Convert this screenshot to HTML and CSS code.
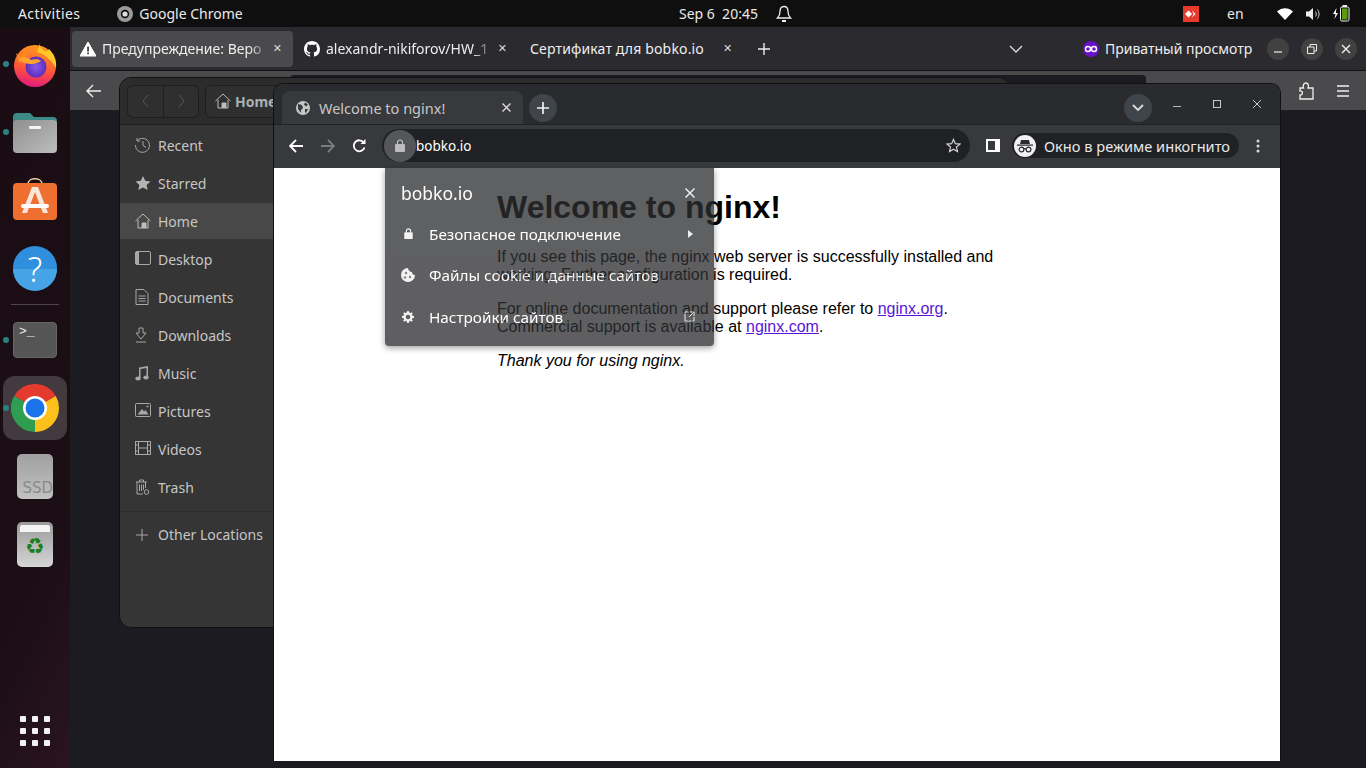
FILE: index.html
```html
<!DOCTYPE html>
<html lang="en">
<head>
    <meta charset="UTF-8">
    <title>Welcome to nginx!</title>
    <link rel="stylesheet" href="styles.css">
</head>
<body>
    <!-- gnome top bar -->
    <header class="topbar">
        <div class="topbar-left">
            <span class="activities">Activities</span>
            <span class="app-menu">
                <svg width="16" height="16" viewBox="0 0 16 16"><circle cx="8" cy="8" r="8" fill="#9a9a9a"/><circle cx="8" cy="8" r="4.2" fill="#0f0f0f"/><circle cx="8" cy="8" r="2.6" fill="#e0e0e0"/></svg>
                Google Chrome
            </span>
        </div>
        <div class="clock">
            <span>Sep 6&nbsp; 20:45</span>
            <svg width="16" height="18" viewBox="0 0 16 18" fill="none" stroke="#eee" stroke-width="1.3"><path d="M8 1.5c-3 0-4 2.300-4 5 0 3-1 5-2.500 6.500h13C13 11.500 12 9.500 12 6.500c0-2.700-1-5-4-5z"/><path d="M6 16h4" stroke-width="2"/></svg>
        </div>
        <div class="tray">
            <span class="anydesk"><svg width="12" height="8" viewBox="0 0 12 8" fill="#fff"><path d="M0 4l3.500-3.500L7 4 3.500 7.500z"/><path d="M7 .5L10.500 4 7 7.500 8.500 4z"/></svg></span>
            <span class="lang">en</span>
            <svg class="tray-wifi" width="16" height="12" viewBox="0 0 16 12" fill="#fff"><path d="M0 3.500C4.500-1 11.500-1 16 3.500L8 12z"/></svg>
            <svg class="tray-sound" width="15" height="14" viewBox="0 0 15 14" fill="none" stroke="#ddd"><path d="M0 4.500h3L7 1v12L3 9.500H0z" fill="#eee" stroke="none"/><path d="M9.500 4.500c1 1.500 1 3.500 0 5M11.500 2.500c2 2.700 2 6.300 0 9"/></svg>
            <svg class="tray-battery" width="17" height="17" viewBox="0 0 17 17"><path d="M3.500 3L0 9h2.500L1.500 14 5 8H2.800z" fill="#fff"/><rect x="7.500" y="2" width="8.500" height="14" rx="1.500" fill="#111" stroke="#eee"/><rect x="9.500" y="0" width="4.500" height="2" fill="#eee"/><rect x="9" y="3.500" width="5.500" height="11" fill="#5d9a0c"/></svg>
        </div>
    </header>

    <!-- dock -->
    <nav class="dock">
        <div class="dock-item running">
            <svg width="44" height="46" viewBox="0 0 44 46">
                <defs>
                    <linearGradient id="fox" x1="0.6" y1="0" x2="0.4" y2="1"><stop offset="0" stop-color="#ff9a1f"/><stop offset=".55" stop-color="#ff5a36"/><stop offset="1" stop-color="#e3197d"/></linearGradient>
                    <radialGradient id="globe"><stop offset="0" stop-color="#8a5bea"/><stop offset="1" stop-color="#5b2db8"/></radialGradient>
                </defs>
                <circle cx="22" cy="25" r="21" fill="url(#fox)"/>
                <path d="M28 0c-3 5 0 8 5 11l3-3c5 5 8 11 7 19-4-7-11-14-19-16 2-4 2-7 4-11z" fill="#ffc928"/>
                <path d="M3 12l4 4 5-8c0 2 1 4 3 5l-9 9z" fill="#ff8a1f"/>
                <circle cx="23" cy="26" r="10.500" fill="url(#globe)"/>
                <path d="M5 18c5-3 10-2 13 1 4-1 8-1 10 1-2 1-6 3-9 3-4 0-10-1-14-5z" fill="#ffa52a"/>
            </svg>
        </div>
        <div class="dock-item running">
            <svg width="44" height="42" viewBox="0 0 44 42">
                <path d="M0 6q0-4 4-4h13l4 4h19q4 0 4 4v14H0z" fill="#3b8a87"/>
                <defs><linearGradient id="folder" x1="0" y1="0" x2="1" y2="1"><stop offset="0" stop-color="#8f8f8f"/><stop offset="1" stop-color="#bdbdbd"/></linearGradient></defs>
                <rect y="9" width="44" height="33" rx="4" fill="url(#folder)"/>
                <rect x="16" y="15" width="12" height="3" rx="1" fill="#f4f4f4"/>
            </svg>
        </div>
        <div class="dock-item">
            <svg width="44" height="44" viewBox="0 0 44 44">
                <path d="M15 6c0-7 14-7 14 0" fill="none" stroke="#eec9a0" stroke-width="1.600"/>
                <rect y="5" width="44" height="37" rx="4" fill="#ef6f31"/>
                <path d="M19 9h6l10 26h-5L22 14 14 35H9z" fill="#fbe6da"/>
                <rect x="8" y="26" width="28" height="4" rx="2" fill="#fff"/>
            </svg>
        </div>
        <div class="dock-item">
            <svg class="help-icon" width="44" height="44" viewBox="0 0 44 44">
                <circle cx="22" cy="22" r="22" fill="#2f8fdd"/>
                <path d="M0 23h44a22 22 0 0 1-44 0z" fill="#46a3e6"/>
                <text x="22" y="36" class="help-mark">?</text>
            </svg>
        </div>
        <div class="dock-sep"></div>
        <div class="dock-item running">
            <div class="terminal-icon"><span>&gt;_</span></div>
        </div>
        <div class="dock-item running active">
            <svg width="48" height="48" viewBox="0 0 48 48">
                <path d="M24 24L3.200 12A24 24 0 0 1 44.800 12z" fill="#e33b2e"/>
                <path d="M24 24h24a24 24 0 0 1-24 24l-0.500 0z" fill="#fcc21b"/>
                <path d="M44.800 12A24 24 0 0 1 48 24H24z" fill="#fcc21b"/>
                <path d="M24 48A24 24 0 0 1 3.200 12L24 24z" fill="#2f9e50"/>
                <circle cx="24" cy="24" r="12" fill="#fff"/>
                <circle cx="24" cy="24" r="9.500" fill="#1a73e8"/>
            </svg>
        </div>
        <div class="dock-item">
            <div class="ssd-icon">SSD</div>
        </div>
        <div class="dock-item">
            <div class="trash-icon">
                <span class="trash-lid"></span>
                <span class="trash-mark">♻</span>
            </div>
        </div>
        <div class="apps-grid">
            <i></i><i></i><i></i><i></i><i></i><i></i><i></i><i></i><i></i>
        </div>
    </nav>

    <!-- firefox window, in the back -->
    <section class="window firefox">
        <div class="ff-tabs">
            <div class="ff-tab current">
                <svg width="16" height="16" viewBox="0 0 16 16"><path d="M8 1l8 14H0z" fill="#fff" stroke="#fff" stroke-linejoin="round"/><rect x="7.200" y="5.500" width="1.700" height="5" fill="#333"/><rect x="7.200" y="11.500" width="1.700" height="1.700" fill="#333"/></svg>
                <span class="ff-tab-title fade">Предупреждение: Веро</span>
                <span class="x">✕</span>
            </div>
            <div class="ff-tab second">
                <svg width="16" height="16" viewBox="0 0 16 16" fill="#fff"><path d="M8 0C3.580 0 0 3.580 0 8c0 3.540 2.290 6.530 5.470 7.590.4.070.55-.17.550-.38 0-.19-.01-.82-.01-1.490-2.010.37-2.530-.49-2.690-.94-.09-.23-.48-.94-.82-1.130-.28-.15-.68-.52-.01-.53.630-.01 1.080.58 1.230.82.720 1.210 1.870.87 2.330.66.070-.52.280-.87.510-1.070-1.780-.2-3.640-.89-3.640-3.950 0-.87.310-1.590.820-2.150-.08-.2-.36-1.020.08-2.120 0 0 .67-.21 2.200.82.640-.18 1.320-.27 2-.27s1.360.09 2 .27c1.530-1.040 2.200-.82 2.200-.82.44 1.100.16 1.920.08 2.120.51.560.82 1.270.82 2.150 0 3.070-1.870 3.750-3.650 3.950.29.250.54.730.54 1.480 0 1.070-.01 1.930-.01 2.200 0 .21.150.460.550.380A8.010 8.010 0 0 0 16 8c0-4.420-3.580-8-8-8z"/></svg>
                <span class="ff-tab-title fade">alexandr-nikiforov/HW_1</span>
                <span class="x">✕</span>
            </div>
            <div class="ff-tab third">
                <span class="ff-tab-title">Сертификат для bobko.io</span>
                <span class="x">✕</span>
            </div>
            <svg class="ff-new" width="14" height="14" viewBox="0 0 14 14" stroke="#eee" stroke-width="1.400"><path d="M7 1v12M1 7h12"/></svg>
            <svg class="ff-list" width="14" height="8" viewBox="0 0 14 8" fill="none" stroke="#ddd" stroke-width="1.300"><path d="M1 1l6 6 6-6"/></svg>
            <span class="ff-private">
                <svg width="16" height="16" viewBox="0 0 16 16"><circle cx="8" cy="8" r="8" fill="#6a12c9"/><circle cx="5" cy="8" r="2.500" fill="none" stroke="#fff" stroke-width="1.400"/><circle cx="11" cy="8" r="2.500" fill="none" stroke="#fff" stroke-width="1.400"/></svg>
                Приватный просмотр
            </span>
            <div class="ff-controls">
                <span class="ff-btn"><svg width="10" height="10" viewBox="0 0 10 10" stroke="#eee" stroke-width="1.200"><path d="M1 8h8"/></svg></span>
                <span class="ff-btn"><svg width="10" height="10" viewBox="0 0 10 10" fill="none" stroke="#eee"><path d="M.5 3h6.500v6.500H.5zM3 3V.5h6.500V7H7"/></svg></span>
                <span class="ff-btn"><svg width="10" height="10" viewBox="0 0 10 10" stroke="#eee" stroke-width="1.400"><path d="M1 1l8 8M9 1l-8 8"/></svg></span>
            </div>
        </div>
        <div class="ff-toolbar">
            <svg width="16" height="14" viewBox="0 0 16 14" fill="none" stroke="#f0f0f0" stroke-width="1.400"><path d="M15 7H1M7 1L1 7l6 6"/></svg>
            <div class="ff-urlbar"></div>
            <svg class="ff-puzzle" width="16" height="18" viewBox="0 0 16 18" fill="none" stroke="#f0f0f0" stroke-width="1.300"><path d="M1 6h3.500c-1-3 .5-5 2.500-5s3 2 2 5H14v11H1v-4c3 .5 3.500-4.500 0-4z"/></svg>
            <svg class="ff-menu" width="14" height="12" viewBox="0 0 14 12" stroke="#f0f0f0" stroke-width="1.400"><path d="M1 1h12M1 6h12M1 11h12"/></svg>
        </div>
        <div class="ff-content"></div>
    </section>

    <!-- nautilus window, in the middle -->
    <section class="window files">
        <div class="files-head">
            <div class="nav-pair">
                <span class="nav-btn"><svg width="7" height="14" viewBox="0 0 7 14" fill="none" stroke="#5a5a5a"><path d="M6 1L1 7l5 6"/></svg></span>
                <span class="nav-btn"><svg width="7" height="14" viewBox="0 0 7 14" fill="none" stroke="#5a5a5a"><path d="M1 1l5 6-5 6"/></svg></span>
            </div>
            <div class="path-btn">
                <svg class="icon" width="16" height="16" viewBox="0 0 16 16" fill="none" stroke="#bdbdbd"><path d="M.5 8L8 1l7.500 7M3 7v8h10V7"/><path d="M7 15v-5h4v5" fill="#bdbdbd"/></svg>
                <b>Home</b>
            </div>
        </div>
        <ul class="places">
            <li><svg width="16" height="16" viewBox="0 0 16 16" fill="none" stroke="#a8a8a8"><path d="M2 4a7 7 0 1 1-1.500 4M2 1v3h3M8 4v4.500l3 2"/></svg>Recent</li>
            <li><svg width="16" height="16" viewBox="0 0 16 16" fill="#b4b4b4"><path d="M8 1l2.200 4.800 5.300.6-3.900 3.500 1.100 5.200L8 12.400l-4.700 2.700 1.100-5.200L.5 6.400l5.300-.6z"/></svg>Starred</li>
            <li class="selected"><svg width="16" height="16" viewBox="0 0 16 16" fill="none" stroke="#bdbdbd"><path d="M.5 8L8 1l7.500 7M3 7v8h10V7"/><path d="M7 15v-5h4v5" fill="#bdbdbd"/></svg>Home</li>
            <li><svg width="16" height="14" viewBox="0 0 16 14" fill="none" stroke="#a8a8a8"><rect x=".5" y=".5" width="15" height="13" rx="1.500"/><path d="M1 1h3v12H1z" fill="#a8a8a8" stroke="none"/></svg>Desktop</li>
            <li><svg width="14" height="16" viewBox="0 0 14 16" fill="none" stroke="#a8a8a8"><path d="M1 .5h8l4 4v11H1zM3.500 7h7M3.500 9.500h7M3.500 12h7"/></svg>Documents</li>
            <li><svg width="12" height="16" viewBox="0 0 12 16" fill="none" stroke="#a8a8a8"><path d="M4 1h4v5h3l-5 6-5-6h3zM1 15h10"/></svg>Downloads</li>
            <li><svg width="14" height="16" viewBox="0 0 14 16" fill="#a8a8a8"><path d="M4 2.500L13 1v11h-1.500V3L5.500 4v9.500H4z"/><ellipse cx="3" cy="13.500" rx="2.700" ry="2"/><ellipse cx="11" cy="12.500" rx="2.700" ry="2"/></svg>Music</li>
            <li><svg width="16" height="14" viewBox="0 0 16 14" fill="none" stroke="#a8a8a8"><rect x=".5" y=".5" width="15" height="13" rx="1"/><path d="M2.500 11.500L7 6l2 2.500 1.500-1.500 3 4.500z" fill="#a8a8a8" stroke="none"/><circle cx="12.500" cy="3.500" r="1" fill="#a8a8a8" stroke="none"/></svg>Pictures</li>
            <li><svg width="16" height="14" viewBox="0 0 16 14" fill="none" stroke="#a8a8a8"><rect x=".5" y=".5" width="15" height="13"/><path d="M3.500 1v12M12.500 1v12M3.500 7h9M.5 4h3M.5 10h3M12.500 4h3M12.500 10h3"/></svg>Videos</li>
            <li><svg width="15" height="16" viewBox="0 0 15 16" fill="none" stroke="#a8a8a8"><path d="M1 3h11M4.500 3V1h4v2M2 3v12h6M10.500 3v6M4.500 5.500V12M6.500 5.500V12M8.500 5.500V11"/><circle cx="11.500" cy="13" r="2.300"/></svg>Trash</li>
            <li class="other"><svg width="14" height="14" viewBox="0 0 14 14" stroke="#a8a8a8"><path d="M7 1v12M1 7h12"/></svg>Other Locations</li>
        </ul>
    </section>

    <!-- chrome incognito window, in front -->
    <section class="window chrome">
        <div class="ch-tabs">
            <div class="ch-tab">
                <svg width="14" height="14" viewBox="0 0 14 14"><circle cx="7" cy="7" r="7" fill="#c4c7c5"/><path d="M2 3l4 1 1 3-2 2v3L2 8zM9 1.500l3 2-2 2-2-2zM9 8h3l-2 4-1-1z" fill="#38393c"/></svg>
                <span class="ch-title">Welcome to nginx!</span>
                <svg class="ch-close" width="9" height="9" viewBox="0 0 9 9" stroke="#dcdcdc" stroke-width="1.400"><path d="M.5.500l8 8M8.500.500l-8 8"/></svg>
            </div>
            <span class="ch-new"><svg width="12" height="12" viewBox="0 0 12 12" stroke="#f1f1f1" stroke-width="1.700"><path d="M6 0v12M0 6h12"/></svg></span>
            <span class="ch-search"><svg width="12" height="8" viewBox="0 0 12 8" fill="none" stroke="#dcdcdc" stroke-width="1.800"><path d="M1 1l5 5 5-5"/></svg></span>
            <div class="ch-controls">
                <svg width="10" height="10" viewBox="0 0 10 10" stroke="#b8b8b8"><path d="M1 7.500h8"/></svg>
                <svg width="10" height="10" viewBox="0 0 10 10" fill="none" stroke="#c8c8c8"><rect x="1.500" y="1.500" width="7" height="7"/></svg>
                <svg width="10" height="10" viewBox="0 0 10 10" stroke="#c8c8c8"><path d="M1 1l8 8M9 1l-8 8"/></svg>
            </div>
        </div>
        <div class="ch-toolbar">
            <svg width="14" height="14" viewBox="0 0 14 14" fill="none" stroke="#fff" stroke-width="1.800"><path d="M14 7H1.500M7 1L1 7l6 6"/></svg>
            <svg class="ch-fwd" width="14" height="14" viewBox="0 0 14 14" fill="none" stroke="#7a7b7d" stroke-width="1.800"><path d="M0 7h12.500M7 1l6 6-6 6"/></svg>
            <svg class="ch-reload" width="15" height="15" viewBox="0 0 15 15" fill="none" stroke="#fff" stroke-width="1.800"><path d="M12.500 9.500a5.500 5.500 0 1 1-.8-5"/><path d="M13.500 1v5h-5z" fill="#fff" stroke="none"/></svg>
            <div class="omnibox">
                <span class="lock-chip"><svg width="10" height="13" viewBox="0 0 10 13"><path d="M2.500 5V3.500a2.500 2.500 0 0 1 5 0V5" fill="none" stroke="#bcbcc0" stroke-width="1.200"/><rect y="5" width="10" height="8" rx="1" fill="#bcbcc0"/></svg></span>
                <span class="url">bobko.io</span>
                <svg class="star" width="15" height="15" viewBox="0 0 16 16" fill="none" stroke="#d0d0d0" stroke-width="1.300"><path d="M8 1.500l2 4.500 4.800.5-3.600 3.200 1 4.800L8 12l-4.200 2.500 1-4.800L1.200 6.500 6 6z"/></svg>
            </div>
            <svg class="ch-panel" width="14" height="13" viewBox="0 0 14 13"><rect width="14" height="13" fill="#fff"/><rect x="2" y="2" width="7" height="9" fill="#38393c"/></svg>
            <div class="incognito">
                <span class="incognito-icon">
                    <svg width="16" height="14" viewBox="0 0 16 14" fill="#2b2b2e"><path d="M4 1h8l1 4H3zM0 5.500h16V6.800H0z"/><g fill="none" stroke="#2b2b2e" stroke-width="1.200"><circle cx="4.500" cy="10.500" r="2.400"/><circle cx="11.500" cy="10.500" r="2.400"/><path d="M7 10c.6-.5 1.400-.5 2 0"/></g></svg>
                </span>
                <span>Окно в режиме инкогнито</span>
            </div>
            <svg class="ch-dots" width="4" height="14" viewBox="0 0 4 14" fill="#dcdcdc"><circle cx="2" cy="2" r="1.500"/><circle cx="2" cy="7" r="1.500"/><circle cx="2" cy="12" r="1.500"/></svg>
        </div>
        <main class="ch-page">
            <div class="nginx">
                <h1>Welcome to nginx!</h1>
                <p>If you see this page, the nginx web server is successfully installed and
                working. Further configuration is required.</p>
                <p>For online documentation and support please refer to
                <a href="#">nginx.org</a>.<br>
                Commercial support is available at
                <a href="#">nginx.com</a>.</p>
                <p><em>Thank you for using nginx.</em></p>
            </div>
            <!-- page info bubble, caught mid fade -->
            <div class="bubble">
                <div class="bubble-head">
                    <span>bobko.io</span>
                    <svg width="10" height="10" viewBox="0 0 10 10" stroke="#e8e8e8" stroke-width="1.500"><path d="M.5.500l9 9M9.500.500l-9 9"/></svg>
                </div>
                <div class="bubble-row">
                    <span class="bubble-icon"><svg width="9" height="11" viewBox="0 0 10 13"><path d="M2.500 5V3.500a2.500 2.500 0 0 1 5 0V5" fill="none" stroke="#eee" stroke-width="1.300"/><rect y="5" width="10" height="8" rx="1" fill="#eee"/></svg></span>
                    <span class="bubble-text">Безопасное подключение</span>
                    <svg class="bubble-end" width="5" height="8" viewBox="0 0 5 8" fill="#e8e8e8"><path d="M0 0l5 4-5 4z"/></svg>
                </div>
                <div class="bubble-row">
                    <span class="bubble-icon"><svg width="14" height="14" viewBox="0 0 14 14"><path d="M7 0a7 7 0 1 0 7 7c-2 0-3-1-3-3-2 0-4-2-4-4z" fill="#eee"/><g fill="#5f5f60"><circle cx="5" cy="5" r="1.200"/><circle cx="4" cy="9.500" r="1.200"/><circle cx="9" cy="9" r="1.200"/></g></svg></span>
                    <span class="bubble-text">Файлы cookie и данные сайтов</span>
                </div>
                <div class="bubble-row">
                    <span class="bubble-icon"><svg width="12" height="12" viewBox="0 0 12 12"><circle cx="6" cy="6" r="3.500" fill="none" stroke="#eee" stroke-width="2.400"/><path d="M6 0v2M6 10v2M0 6h2M10 6h2M1.800 1.800l1.400 1.400M8.800 8.800l1.400 1.400M1.800 10.200l1.400-1.400M8.800 3.200l1.400-1.400" stroke="#eee" stroke-width="1.800"/></svg></span>
                    <span class="bubble-text">Настройки сайтов</span>
                    <svg class="bubble-end ext" width="11" height="11" viewBox="0 0 11 11" fill="none" stroke="#e8e8e8"><path d="M5 1H1v9h9V6M6 1h4v4M10 1L5 6"/></svg>
                </div>
            </div>
        </main>
    </section>
</body>
</html>
```

FILE: styles.css
```css
* {
    box-sizing: border-box;
}

html, body {
    margin: 0;
    height: 100%;
    overflow: hidden;
}

body {
    background: #1c1b22;
    font-family: 'Noto Sans', sans-serif;
    color: #eee;
    position: relative;
}

svg {
    flex: none;
    display: block;
}

/* top bar */
.topbar {
    height: 27px;
    background: #0f0f0f;
    display: flex;
    align-items: center;
    position: relative;
    font-size: 14px;
    color: #eaeaea;
}

.topbar-left {
    display: flex;
    align-items: center;
    padding-left: 18px;
}

.activities {
    letter-spacing: 0.4px;
}

.app-menu {
    display: flex;
    align-items: center;
    gap: 6px;
    margin-left: 37px;
}

.clock {
    position: absolute;
    left: 679px;
    top: 0;
    height: 27px;
    display: flex;
    align-items: center;
    gap: 18px;
}

.tray {
    margin-left: auto;
    display: flex;
    align-items: center;
    padding-right: 16px;
}

.anydesk {
    width: 16px;
    height: 16px;
    background: #e8392f;
    display: flex;
    align-items: center;
    justify-content: center;
}

.lang {
    margin-left: 28px;
    width: 38px;
}

.tray-wifi {
    margin-left: 12px;
}

.tray-sound {
    margin-left: 13px;
}

.tray-battery {
    margin-left: 12px;
}

/* dock */
.dock {
    position: absolute;
    left: 0;
    top: 27px;
    bottom: 0;
    width: 70px;
    background: linear-gradient(115deg, #190c13 0%, #1b0e15 70%, #2a1420 100%);
    display: flex;
    flex-direction: column;
    align-items: center;
    padding-top: 3px;
}

.dock-item {
    width: 64px;
    height: 68px;
    flex: none;
    display: flex;
    align-items: center;
    justify-content: center;
    border-radius: 12px;
    position: relative;
}

.dock-item.running::before {
    content: "";
    position: absolute;
    left: 0;
    top: 31px;
    width: 6px;
    height: 6px;
    border-radius: 50%;
    background: #2b8182;
}

.dock-item.active {
    height: 64px;
    margin: 2px 0;
    background: #433a3f;
}

.dock-item.active::before {
    top: 29px;
}

.dock-sep {
    width: 48px;
    height: 1px;
    background: #4d474a;
    margin: 2px 0 1px;
    flex: none;
}

.help-icon {
    overflow: visible;
}

.help-mark {
    font-family: 'Noto Sans', sans-serif;
    font-size: 34px;
    font-weight: 300;
    fill: #fff;
    text-anchor: middle;
}

.terminal-icon {
    width: 44px;
    height: 36px;
    background: #555;
    border: 1px solid #666;
    border-radius: 4px;
    font-family: 'Liberation Mono', monospace;
    font-size: 13px;
    line-height: 14px;
    padding: 2px 0 0 5px;
    color: #eee;
}

.ssd-icon {
    width: 36px;
    height: 45px;
    background: linear-gradient(#a0a0a0, #c2c2c2);
    border-radius: 5px;
    color: #8a8a8a;
    font-size: 15px;
    line-height: 18px;
    padding-top: 25px;
    text-align: right;
    font-family: 'DejaVu Sans', sans-serif;
    overflow: hidden;
    white-space: nowrap;
}

.trash-icon {
    width: 36px;
    height: 45px;
    background: linear-gradient(#9a9a9a, #d6d6d6);
    border-radius: 5px;
    display: flex;
    flex-direction: column;
    align-items: center;
    padding-top: 3px;
}

.trash-lid {
    width: 30px;
    height: 7px;
    background: #f4f4f4;
    border-radius: 2px 2px 0 0;
}

.trash-mark {
    font-family: 'DejaVu Sans', sans-serif;
    font-size: 22px;
    line-height: 30px;
    color: #1a7f1a;
}

.apps-grid {
    position: absolute;
    left: 20px;
    bottom: 22px;
    display: grid;
    grid-template-columns: repeat(3, 6px);
    gap: 6px;
}

.apps-grid i {
    width: 6px;
    height: 6px;
    background: #f2f2f2;
    border-radius: 1px;
}

/* windows sit on the desktop */
.window {
    position: absolute;
}

.firefox {
    left: 70px;
    top: 27px;
    right: 0;
    bottom: 0;
    display: flex;
    flex-direction: column;
}

.ff-tabs {
    height: 44px;
    background: #2b2a2e;
    display: flex;
    align-items: center;
    padding-left: 2px;
    font-size: 14px;
    border-bottom: 1px solid #111;
}

.ff-tab {
    height: 36px;
    display: flex;
    align-items: center;
    border-radius: 4px;
    color: #eee;
    flex: none;
}

.ff-tab.current {
    width: 221px;
    background: #4a4a4c;
    padding: 0 11px 0 8px;
}

.ff-tab.second {
    width: 224px;
    padding: 0 10px 0 11px;
}

.ff-tab.third {
    width: 238px;
    padding: 0 0 0 7px;
}

.ff-tab-title {
    margin-left: 6px;
    flex: 1;
    white-space: nowrap;
    overflow: hidden;
}

.third .ff-tab-title {
    flex: none;
    width: 189px;
    letter-spacing: 0.15px;
}

.fade {
    -webkit-mask-image: linear-gradient(90deg, #000 88%, transparent);
}

.x {
    font-family: 'DejaVu Sans', sans-serif;
    font-size: 11px;
    color: #ddd;
    margin-left: 4px;
}

.ff-new {
    margin-left: 2px;
}

.ff-list {
    margin-left: 238px;
}

.ff-private {
    display: flex;
    align-items: center;
    gap: 6px;
    margin-left: 60px;
    white-space: nowrap;
}

.ff-controls {
    display: flex;
    gap: 12px;
    margin-left: 15px;
}

.ff-btn {
    width: 22px;
    height: 22px;
    border-radius: 50%;
    background: #414141;
    display: flex;
    align-items: center;
    justify-content: center;
}

.ff-toolbar {
    height: 39px;
    background: #4a4a4c;
    display: flex;
    align-items: center;
    padding-left: 16px;
}

.ff-urlbar {
    width: 856px;
    height: 32px;
    margin-left: 188px;
    background: #1c1b22;
    border-radius: 4px;
}

.ff-puzzle {
    margin-left: 153px;
}

.ff-menu {
    margin-left: 21px;
}

.ff-content {
    flex: 1;
    background: #1c1b22;
}

.files {
    left: 119px;
    top: 77px;
    width: 891px;
    height: 551px;
    background: #353535;
    border: 1px solid #111;
    border-radius: 12px;
    overflow: hidden;
    font-size: 14px;
    color: #c6c6c6;
}

.files-head {
    height: 47px;
    background: #2c2c2c;
    border-bottom: 1px solid #1e1e1e;
    display: flex;
    align-items: center;
    padding: 0 0 0 7px;
    gap: 6px;
}

.nav-pair {
    display: flex;
    border: 1px solid #1f1f1f;
    border-radius: 6px;
    background: #2f2f2f;
    height: 33px;
}

.nav-btn {
    width: 35px;
    display: flex;
    align-items: center;
    justify-content: center;
}

.nav-btn + .nav-btn {
    border-left: 1px solid #1f1f1f;
}

.path-btn {
    display: flex;
    align-items: center;
    gap: 4px;
    height: 33px;
    width: 200px;
    padding-left: 9px;
    border: 1px solid #1f1f1f;
    border-radius: 6px;
    background: #2f2f2f;
    color: #aab0b6;
}

.places {
    list-style: none;
    margin: 1px 0 0;
    padding: 0;
}

.places li {
    height: 38px;
    display: flex;
    align-items: center;
    position: relative;
    padding-left: 38px;
}

.places li svg {
    position: absolute;
    left: 15px;
    top: 11px;
}

.places li.selected {
    background: #484848;
    height: 36px;
    margin: 1px 0;
}

.places li.selected svg {
    top: 10px;
}

.places li.other {
    border-top: 1px solid #2c2c2c;
    height: 46px;
    margin-top: 5px;
}

.places li.other svg {
    top: 16px;
}

.chrome {
    left: 273px;
    top: 83px;
    width: 1008px;
    height: 678px;
    border: 1px solid #111;
    border-bottom: 0;
    border-radius: 10px 10px 0 0;
    overflow: hidden;
    display: flex;
    flex-direction: column;
}

.ch-tabs {
    height: 40px;
    background: #2a2b2e;
    display: flex;
    align-items: flex-end;
    padding-left: 8px;
    position: relative;
}

.ch-tab {
    width: 241px;
    height: 33px;
    background: #38393c;
    border-radius: 8px 8px 0 0;
    display: flex;
    align-items: center;
    padding: 0 12px 0 14px;
    font-size: 14.5px;
    color: #c6c7c8;
}

.ch-title {
    margin-left: 9px;
    flex: 1;
}

.ch-new {
    width: 28px;
    height: 28px;
    border-radius: 50%;
    background: #3f454b;
    display: flex;
    align-items: center;
    justify-content: center;
    margin: 0 0 2px 6px;
}

.ch-search {
    position: absolute;
    left: 850px;
    top: 10px;
    width: 28px;
    height: 28px;
    border-radius: 50%;
    background: #3f454b;
    display: flex;
    align-items: center;
    justify-content: center;
}

.ch-controls {
    position: absolute;
    right: 18px;
    top: 15px;
    display: flex;
    gap: 30px;
}

.ch-toolbar {
    height: 44px;
    background: #38393c;
    display: flex;
    align-items: center;
    padding: 0 0 2px 15px;
    border-top: 1px solid #202124;
}

.ch-fwd {
    margin-left: 18px;
}

.ch-reload {
    margin-left: 17px;
}

.omnibox {
    width: 588px;
    height: 33px;
    margin-left: 15px;
    background: #202124;
    border-radius: 17px;
    display: flex;
    align-items: center;
    font-size: 13.5px;
    color: #fff;
    padding: 0 9px 0 2px;
}

.lock-chip {
    width: 32px;
    height: 32px;
    border-radius: 50%;
    background: #55565a;
    display: flex;
    align-items: center;
    justify-content: center;
}

.url {
    flex: 1;
}

.ch-panel {
    margin-left: 16px;
}

.incognito {
    width: 227px;
    height: 25px;
    margin-left: 12px;
    background: #202124;
    border-radius: 13px;
    display: flex;
    align-items: center;
    gap: 8px;
    padding-left: 2px;
    font-size: 14.6px;
    color: #e8e8e8;
    white-space: nowrap;
}

.incognito-icon {
    width: 22px;
    height: 22px;
    border-radius: 50%;
    background: #f1f1f1;
    display: flex;
    align-items: center;
    justify-content: center;
}

.ch-dots {
    margin-left: 17px;
}

.ch-page {
    flex: 1;
    background: #fff;
    position: relative;
    font-family: 'Liberation Sans', Arial, sans-serif;
    font-size: 16px;
    color: #000;
}

.nginx {
    width: 560px;
    margin: 0 auto;
    padding-top: 1px;
    line-height: 18px;
}

.nginx h1 {
    font-size: 32px;
    line-height: 37px;
    margin: 20px 0 22px;
}

.nginx p {
    margin: 16px 0;
}

.nginx a {
    color: #5a14d8;
}

.bubble {
    position: absolute;
    left: 111px;
    top: 0;
    width: 329px;
    height: 178px;
    background: #2d2e30;
    border-radius: 0 0 4px 4px;
    box-shadow: 0 2px 6px rgba(0, 0, 0, 0.5);
    opacity: 0.76;
    color: #fff;
    font-family: 'Noto Sans', sans-serif;
    font-size: 15.3px;
    padding: 0 19px 0 16px;
}

.bubble-head {
    display: flex;
    align-items: center;
    justify-content: space-between;
    height: 45px;
    font-size: 17.5px;
    padding-top: 5px;
}

.bubble-row {
    height: 41.5px;
    display: flex;
    align-items: center;
    white-space: nowrap;
}

.bubble-icon {
    width: 28px;
    display: flex;
    justify-content: center;
    margin-left: -7px;
    margin-right: 7px;
}

.bubble-text {
    flex: 1;
}

.bubble-end {
    margin-right: 2px;
}

.bubble-end.ext {
    margin-right: 0;
}
```
